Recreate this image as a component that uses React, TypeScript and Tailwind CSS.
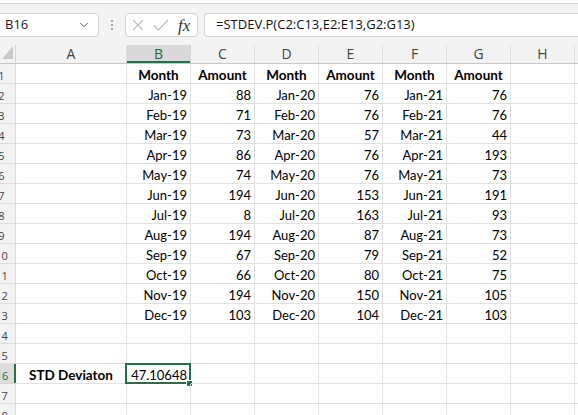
import { ChevronDown } from 'lucide-react';

const months = ['Jan', 'Feb', 'Mar', 'Apr', 'May', 'Jun', 'Jul', 'Aug', 'Sep', 'Oct', 'Nov', 'Dec'];
const amounts: Record<string, number[]> = {
  '19': [88, 71, 73, 86, 74, 194, 8, 194, 67, 66, 194, 103],
  '20': [76, 76, 57, 76, 76, 153, 163, 87, 79, 80, 150, 104],
  '21': [76, 76, 44, 193, 73, 191, 93, 73, 52, 75, 105, 103],
};

const columns = [
  { key: 'A', w: 'w-[111px]' },
  { key: 'B', w: 'w-[64px]' },
  { key: 'C', w: 'w-[64px]' },
  { key: 'D', w: 'w-[64px]' },
  { key: 'E', w: 'w-[64px]' },
  { key: 'F', w: 'w-[64px]' },
  { key: 'G', w: 'w-[64px]' },
  { key: 'H', w: 'w-[64px]' },
  { key: 'I', w: 'w-[64px]' },
];

type CellValue = { text: string; bold?: boolean; align?: 'left' | 'right' | 'center' };

function buildRows(): CellValue[][] {
  const rows: CellValue[][] = [];
  const header: CellValue[] = [{ text: '' }];
  for (let i = 0; i < 3; i++) {
    header.push({ text: 'Month', bold: true, align: 'center' });
    header.push({ text: 'Amount', bold: true, align: 'center' });
  }
  rows.push(header);
  months.forEach((m, i) => {
    const row: CellValue[] = [{ text: '' }];
    ['19', '20', '21'].forEach((y) => {
      row.push({ text: `${m}-${y}`, align: 'right' });
      row.push({ text: String(amounts[y][i]), align: 'right' });
    });
    rows.push(row);
  });
  rows.push([], []);
  rows.push([
    { text: 'STD Deviaton', bold: true, align: 'center' },
    { text: '47.10648', align: 'right' },
  ]);
  rows.push([], []);
  return rows;
}

const SELECTED_ROW = 16;
const SELECTED_COL = 'B';

function FormulaBar() {
  return (
    <div className="flex h-[41px] items-start gap-[6px] bg-[#f3f3f3] pt-[9px]">
      <div className="-ml-[6px] flex h-[24px] w-[105px] items-center justify-between rounded-[4px] border border-[#d4d4d4] bg-white pl-[10px] pr-[7px] text-[13px] text-[#222]">
        <span>B16</span>
        <ChevronDown className="h-[14px] w-[14px] text-[#555]" strokeWidth={1.6} />
      </div>
      <div className="flex h-[24px] w-[14px] flex-col items-center justify-center gap-[2px]">
        <span className="h-[2px] w-[2px] rounded-full bg-[#8a8a8a]" />
        <span className="h-[2px] w-[2px] rounded-full bg-[#8a8a8a]" />
        <span className="h-[2px] w-[2px] rounded-full bg-[#8a8a8a]" />
      </div>
      <div className="flex h-[24px] w-[73px] items-center rounded-[4px] border border-[#d4d4d4] bg-white pl-[6px]">
        <svg width="12" height="12" viewBox="0 0 12 12" className="text-[#bdbdbd]">
          <path d="M1 1 L11 11 M11 1 L1 11" stroke="currentColor" strokeWidth="1.1" fill="none" />
        </svg>
        <svg width="16" height="12" viewBox="0 0 16 12" className="ml-[9px] text-[#bdbdbd]">
          <path d="M1 6.5 L5.5 11 L15 1" stroke="currentColor" strokeWidth="1.1" fill="none" />
        </svg>
        <span className="ml-[9px] font-['Liberation_Serif',serif] text-[17px] italic leading-none text-[#333]">
          fx
        </span>
      </div>
      <div className="flex h-[24px] flex-1 items-center rounded-l-[4px] border border-r-0 border-[#d4d4d4] bg-white pl-[11px] text-[13px] text-[#111]">
        =STDEV.P(C2:C13,E2:E13,G2:G13)
      </div>
    </div>
  );
}

function ColumnHeaders() {
  return (
    <div className="flex h-[19px] border-b border-[#c8c8c8] bg-[#f3f3f3] text-[14px] text-[#444]">
      <div className="flex w-[31px] shrink-0 items-end justify-end border-r border-[#d4d4d4] pb-[4px] pr-[2px]">
        <svg width="11" height="13" viewBox="0 0 11 13">
          <path d="M11 0 L11 13 L0 13 Z" fill="#c9c9c9" />
        </svg>
      </div>
      {columns.map((c) => {
        const active = c.key === SELECTED_COL;
        return (
          <div
            key={c.key}
            className={`${c.w} flex shrink-0 items-center justify-center border-r leading-[18px] ${
              active
                ? 'border-[#d4d4d4] bg-[#d9d9d9] text-[#1a6b3c] shadow-[inset_0_-2px_0_#217346]'
                : 'border-[#dcdcdc]'
            }`}
          >
            {c.key}
          </div>
        );
      })}
    </div>
  );
}

function Row({ n, cells }: { n: number; cells: CellValue[] }) {
  const activeRow = n === SELECTED_ROW;
  return (
    <div className="flex h-[20px]">
      <div
        className={`w-[31px] shrink-0 border-b pl-[3px] pt-[3.5px] text-center text-[11px] leading-[15px] ${
          activeRow
            ? 'border-[#d4d4d4] bg-[#dcdcdc] text-[#1a6b3c] shadow-[inset_-2px_0_0_#217346]'
            : 'border-r border-[#dcdcdc] bg-[#f3f3f3] text-[#444]'
        }`}
      >
        {n}
      </div>
      {columns.map((c, i) => {
        const cell = cells[i];
        const selected = activeRow && c.key === SELECTED_COL;
        const align =
          cell?.align === 'right' ? 'text-right pr-[3px]' : cell?.align === 'center' ? 'text-center' : 'text-left pl-[3px]';
        return (
          <div
            key={c.key}
            className={`${c.w} relative shrink-0 border-b border-r border-[#e1e1e1] pt-[3px] font-['Lato',sans-serif] leading-[17px] text-black ${align} ${
              cell?.bold ? 'text-[13.5px] font-bold' : 'text-[13px]'
            }`}
          >
            {cell?.text}
            {selected && (
              <>
                <div className="absolute -bottom-[1px] -left-[2px] -right-[1px] -top-[1px] border-2 border-[#217346]" />
                <div className="absolute -bottom-[4px] -right-[3px] h-[7px] w-[7px] border border-white bg-[#217346]" />
              </>
            )}
          </div>
        );
      })}
    </div>
  );
}

export default function App() {
  const rows = buildRows();
  return (
    <div className="h-[415px] w-[578px] overflow-hidden bg-white font-['Open_Sans',sans-serif]">
      <div className="h-[4px] border-b border-[#d4d4d4] bg-white" />
      <FormulaBar />
      <div className="-ml-[15px]">
        <ColumnHeaders />
        {rows.map((cells, i) => (
          <Row key={i} n={i + 1} cells={cells} />
        ))}
      </div>
    </div>
  );
}
